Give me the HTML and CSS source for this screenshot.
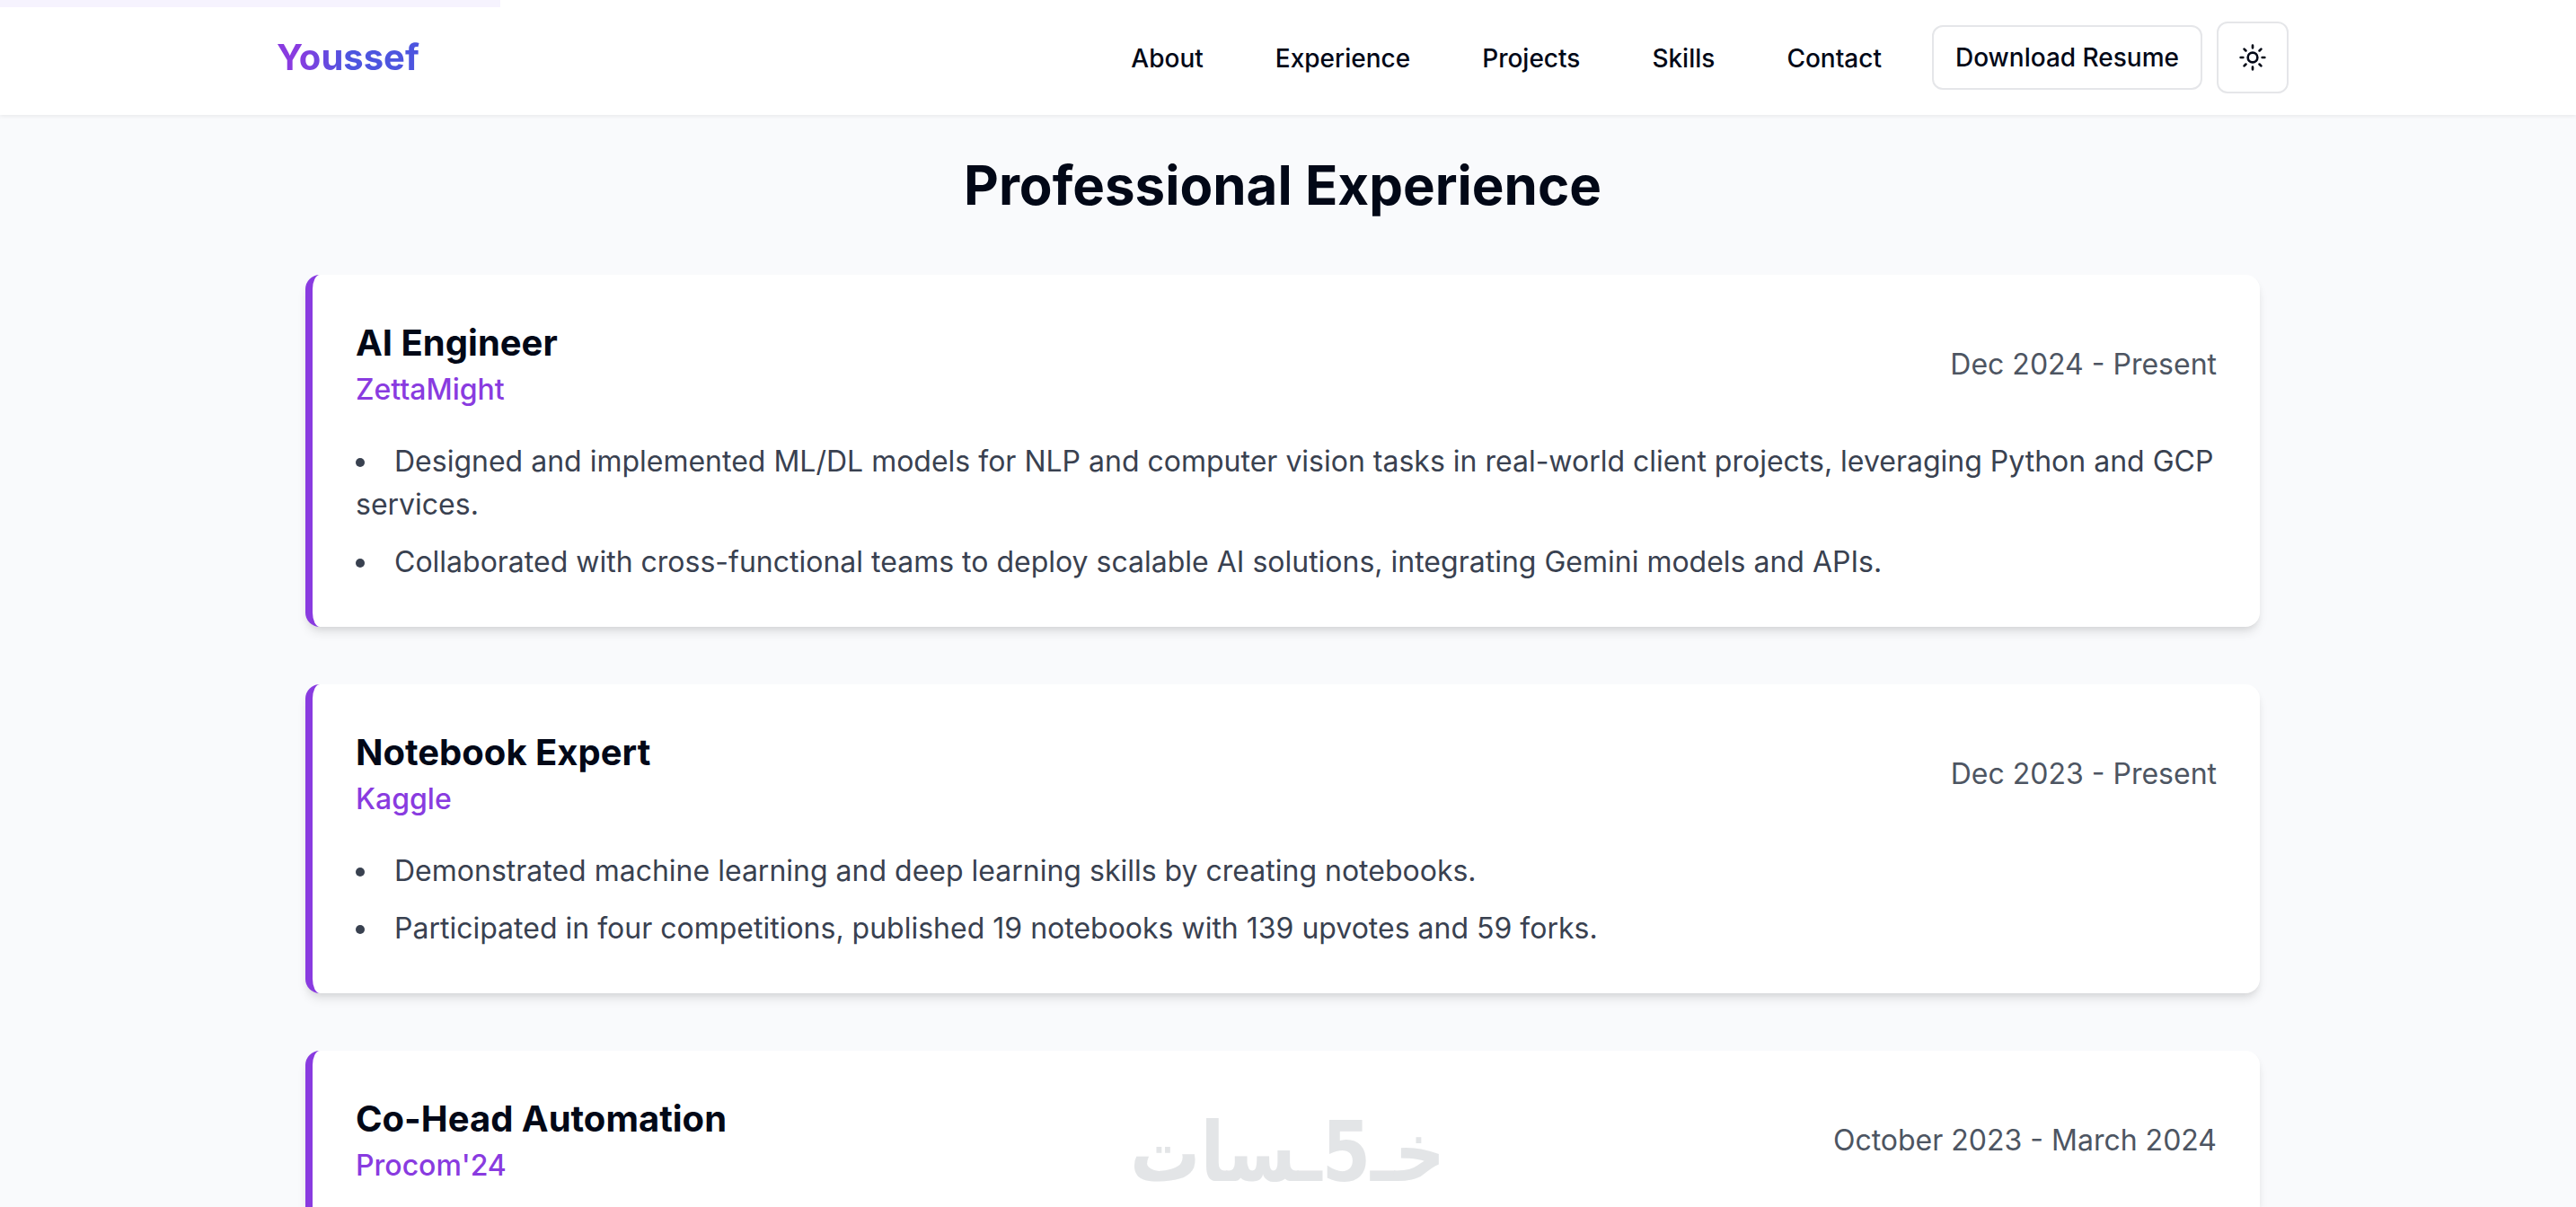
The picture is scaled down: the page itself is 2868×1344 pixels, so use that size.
FILE: index.html
```html
<!DOCTYPE html>
<html lang="en">
<head>
  <meta charset="UTF-8">
  <meta name="viewport" content="width=device-width, initial-scale=1.0">
  <title>Youssef - Portfolio</title>
  <link rel="stylesheet" href="styles.css">
</head>
<body>
  <header class="header">
    <div class="progress"></div>
    <div class="header-inner">
      <a href="#" class="logo">Youssef</a>
      <div class="header-right">
        <nav class="nav">
          <a href="#about">About</a>
          <a href="#experience">Experience</a>
          <a href="#projects">Projects</a>
          <a href="#skills">Skills</a>
          <a href="#contact">Contact</a>
        </nav>
        <div class="actions">
          <button class="btn resume-btn">Download Resume</button>
          <button class="btn theme-btn" aria-label="Toggle theme">
            <svg class="sun" viewBox="0 0 24 24" fill="none" stroke="currentColor" stroke-width="2" stroke-linecap="round" stroke-linejoin="round">
              <circle cx="12" cy="12" r="4"/>
              <path d="M12 2v2M12 20v2M4.93 4.93l1.41 1.41M17.66 17.66l1.41 1.41M2 12h2M20 12h2M6.34 17.66l-1.41 1.41M19.07 4.93l-1.41 1.41"/>
            </svg>
          </button>
        </div>
      </div>
    </div>
  </header>

  <main class="experience" id="experience">
    <h2>Professional Experience</h2>
    <div class="cards">
      <article class="card">
        <div class="card-header">
          <div>
            <h3>AI Engineer</h3>
            <p class="company">ZettaMight</p>
          </div>
          <p class="date">Dec 2024 - Present</p>
        </div>
        <ul>
          <li>Designed and implemented ML/DL models for NLP and computer vision tasks in real-world client projects, leveraging Python and GCP services.</li>
          <li>Collaborated with cross-functional teams to deploy scalable AI solutions, integrating Gemini models and APIs.</li>
        </ul>
      </article>

      <article class="card">
        <div class="card-header">
          <div>
            <h3>Notebook Expert</h3>
            <p class="company">Kaggle</p>
          </div>
          <p class="date">Dec 2023 - Present</p>
        </div>
        <ul>
          <li>Demonstrated machine learning and deep learning skills by creating notebooks.</li>
          <li>Participated in four competitions, published 19 notebooks with 139 upvotes and 59 forks.</li>
        </ul>
      </article>

      <article class="card card-last">
        <div class="card-header">
          <div>
            <h3>Co-Head Automation</h3>
            <p class="company">Procom'24</p>
          </div>
          <p class="date">October 2023 - March 2024</p>
        </div>
      </article>
    </div>
  </main>

  <svg class="watermark" viewBox="0 0 344 84" lang="ar">
    <text x="347" y="68" direction="rtl" textLength="351" lengthAdjust="spacingAndGlyphs">خـ5ـسات</text>
  </svg>
</body>
</html>
```

FILE: styles.css
```css
* {
  box-sizing: border-box;
  margin: 0;
  padding: 0;
}

body {
  font-family: Inter, "Liberation Sans", sans-serif;
  font-size: 32px;
  line-height: 48px;
  color: #020817;
  background-color: #f9fafc;
  height: 1344px;
  padding-right: 12px;
  overflow: hidden;
}

a {
  color: inherit;
  text-decoration: none;
}

.header {
  position: relative;
  height: 128px;
  margin-right: -12px;
  padding-right: 12px;
  background-color: #fff;
  box-shadow: 0 2px 4px rgba(0, 0, 0, 0.06);
}

.progress {
  position: absolute;
  top: 0;
  left: 0;
  width: 557px;
  height: 8px;
  background-color: #f6f3fe;
}

.header-inner {
  display: flex;
  justify-content: space-between;
  align-items: center;
  width: 2304px;
  height: 128px;
  margin: 0 auto;
  padding: 0 32px;
}

.logo {
  font-size: 40px;
  line-height: 56px;
  font-weight: 700;
  background: linear-gradient(to right, #893be0 15%, #4d55df 50%);
  -webkit-background-clip: text;
  background-clip: text;
  color: transparent;
}

.header-right {
  display: flex;
  align-items: center;
  gap: 32px;
}

.nav {
  display: flex;
  gap: 32px;
  padding-top: 2px;
}

.nav a {
  padding: 0 24px;
  font-size: 28px;
  font-weight: 500;
  line-height: 40px;
}

.actions {
  display: flex;
  align-items: center;
  gap: 16px;
}

.btn {
  display: flex;
  align-items: center;
  justify-content: center;
  border: 2px solid #e5e6e9;
  border-radius: 12px;
  background-color: #fff;
  color: #020817;
  font-family: inherit;
  font-size: 28px;
  font-weight: 500;
  line-height: 40px;
}

.resume-btn {
  height: 72px;
  padding: 0 24px;
}

.theme-btn {
  width: 80px;
  height: 80px;
}

.sun {
  width: 32px;
  height: 32px;
}

.experience {
  width: 2304px;
  height: 1216px;
  margin: 0 auto;
  padding: 42px 64px 0;
  overflow: hidden;
}

h2 {
  margin-bottom: 64px;
  font-size: 60px;
  font-weight: 700;
  line-height: 72px;
  text-align: center;
}

.cards {
  display: flex;
  flex-direction: column;
  gap: 64px;
}

.card {
  padding: 48px;
  border-left: 8px solid #893be0;
  border-radius: 16px;
  background-color: #fff;
  box-shadow: 0 8px 12px -2px rgba(0, 0, 0, 0.1), 0 4px 8px -4px rgba(0, 0, 0, 0.1);
}

/* runs to the bottom of the window */
.card-last {
  height: 174px;
  border-bottom-left-radius: 0;
  border-bottom-right-radius: 0;
}

.card-header {
  display: flex;
  justify-content: space-between;
  align-items: center;
  margin-bottom: 32px;
}

h3 {
  font-size: 40px;
  font-weight: 700;
  line-height: 56px;
}

.company {
  color: #893be0;
  font-weight: 500;
}

.date {
  color: #4d5562;
}

ul {
  display: flex;
  flex-direction: column;
  gap: 16px;
  list-style: disc inside;
  color: #394150;
}

.watermark {
  position: absolute;
  left: 1262px;
  top: 1247px;
  width: 344px;
  height: 84px;
  overflow: visible;
  fill: #e3e5e7;
  font-family: "DejaVu Sans", sans-serif;
  font-size: 92px;
  font-weight: 700;
}
```
